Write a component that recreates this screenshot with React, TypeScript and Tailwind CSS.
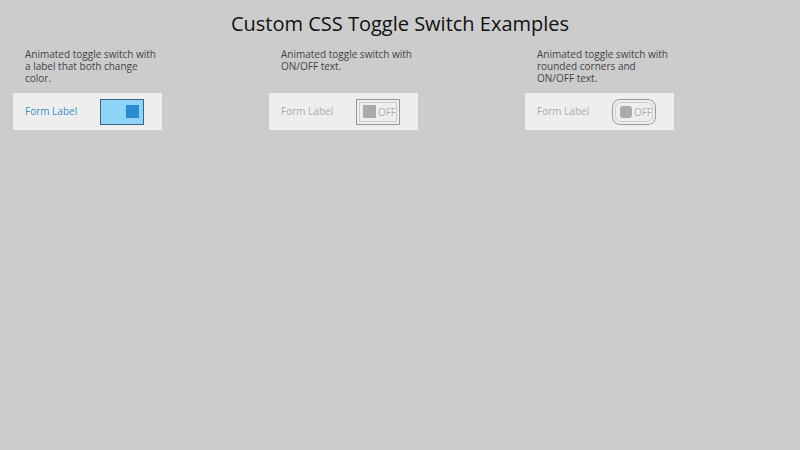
import React from "react";

type Variant = "color" | "text" | "rounded";

const examples: { variant: Variant; description: string[] }[] = [
  {
    variant: "color",
    description: ["Animated toggle switch with", "a label that both change", "color."],
  },
  {
    variant: "text",
    description: ["Animated toggle switch with", "ON/OFF text."],
  },
  {
    variant: "rounded",
    description: ["Animated toggle switch with", "rounded corners and", "ON/OFF text."],
  },
];

const Toggle: React.FC<{ variant: Variant }> = ({ variant }) => {
  if (variant === "color") {
    return (
      <div className="w-[44px] h-[26px] border border-[#3a6480] bg-[#8dd4f7] flex items-center justify-end pr-[4px]">
        <span className="w-[13px] h-[13px] bg-[#2a8bd2]" />
      </div>
    );
  }

  const rounded = variant === "rounded";
  return (
    <div
      className={
        rounded
          ? "w-[44px] h-[26px] border border-[#999] rounded-[8px] p-[2px] bg-[#eee]"
          : "w-[44px] h-[26px] border border-[#999] p-[2px] bg-[#eee]"
      }
    >
      <div
        className={
          rounded
            ? "w-full h-full border border-[#ccc] rounded-[6px] flex items-center pl-[4px] gap-[2px]"
            : "w-full h-full border border-[#ccc] flex items-center pl-[3px] gap-[2px]"
        }
      >
        <span
          className={
            rounded
              ? "w-[12px] h-[12px] bg-[#aaa] rounded-[3px]"
              : "w-[13px] h-[13px] bg-[#aaa]"
          }
        />
        <span className="text-[10px] leading-none text-[#b0b0b0]">OFF</span>
      </div>
    </div>
  );
};

export default function App() {
  return (
    <div
      className="w-[800px] h-[450px] bg-[#cccccc] text-[#444]"
      style={{ fontFamily: '"Open Sans", "Noto Sans", sans-serif' }}
    >
      <h1 className="text-center text-[20px] leading-[20px] text-[#111] pt-[14px]">
        Custom CSS Toggle Switch Examples
      </h1>

      <div className="grid grid-cols-[256px_256px_256px] mt-[14px]">
        {examples.map((ex) => (
          <div key={ex.variant} className="pl-[13px]">
            <p className="pl-[12px] text-[10px] leading-[12px] h-[45px]">
              {ex.description.map((line) => (
                <span key={line} className="block">
                  {line}
                </span>
              ))}
            </p>
            <div className="w-[149px] h-[37px] bg-[#eeeeee] flex items-center pl-[12px]">
              <span
                className={
                  ex.variant === "color"
                    ? "text-[10px] text-[#3a8fc4] w-[75px]"
                    : "text-[10px] text-[#aaa] w-[75px]"
                }
              >
                Form Label
              </span>
              <Toggle variant={ex.variant} />
            </div>
          </div>
        ))}
      </div>
    </div>
  );
}
